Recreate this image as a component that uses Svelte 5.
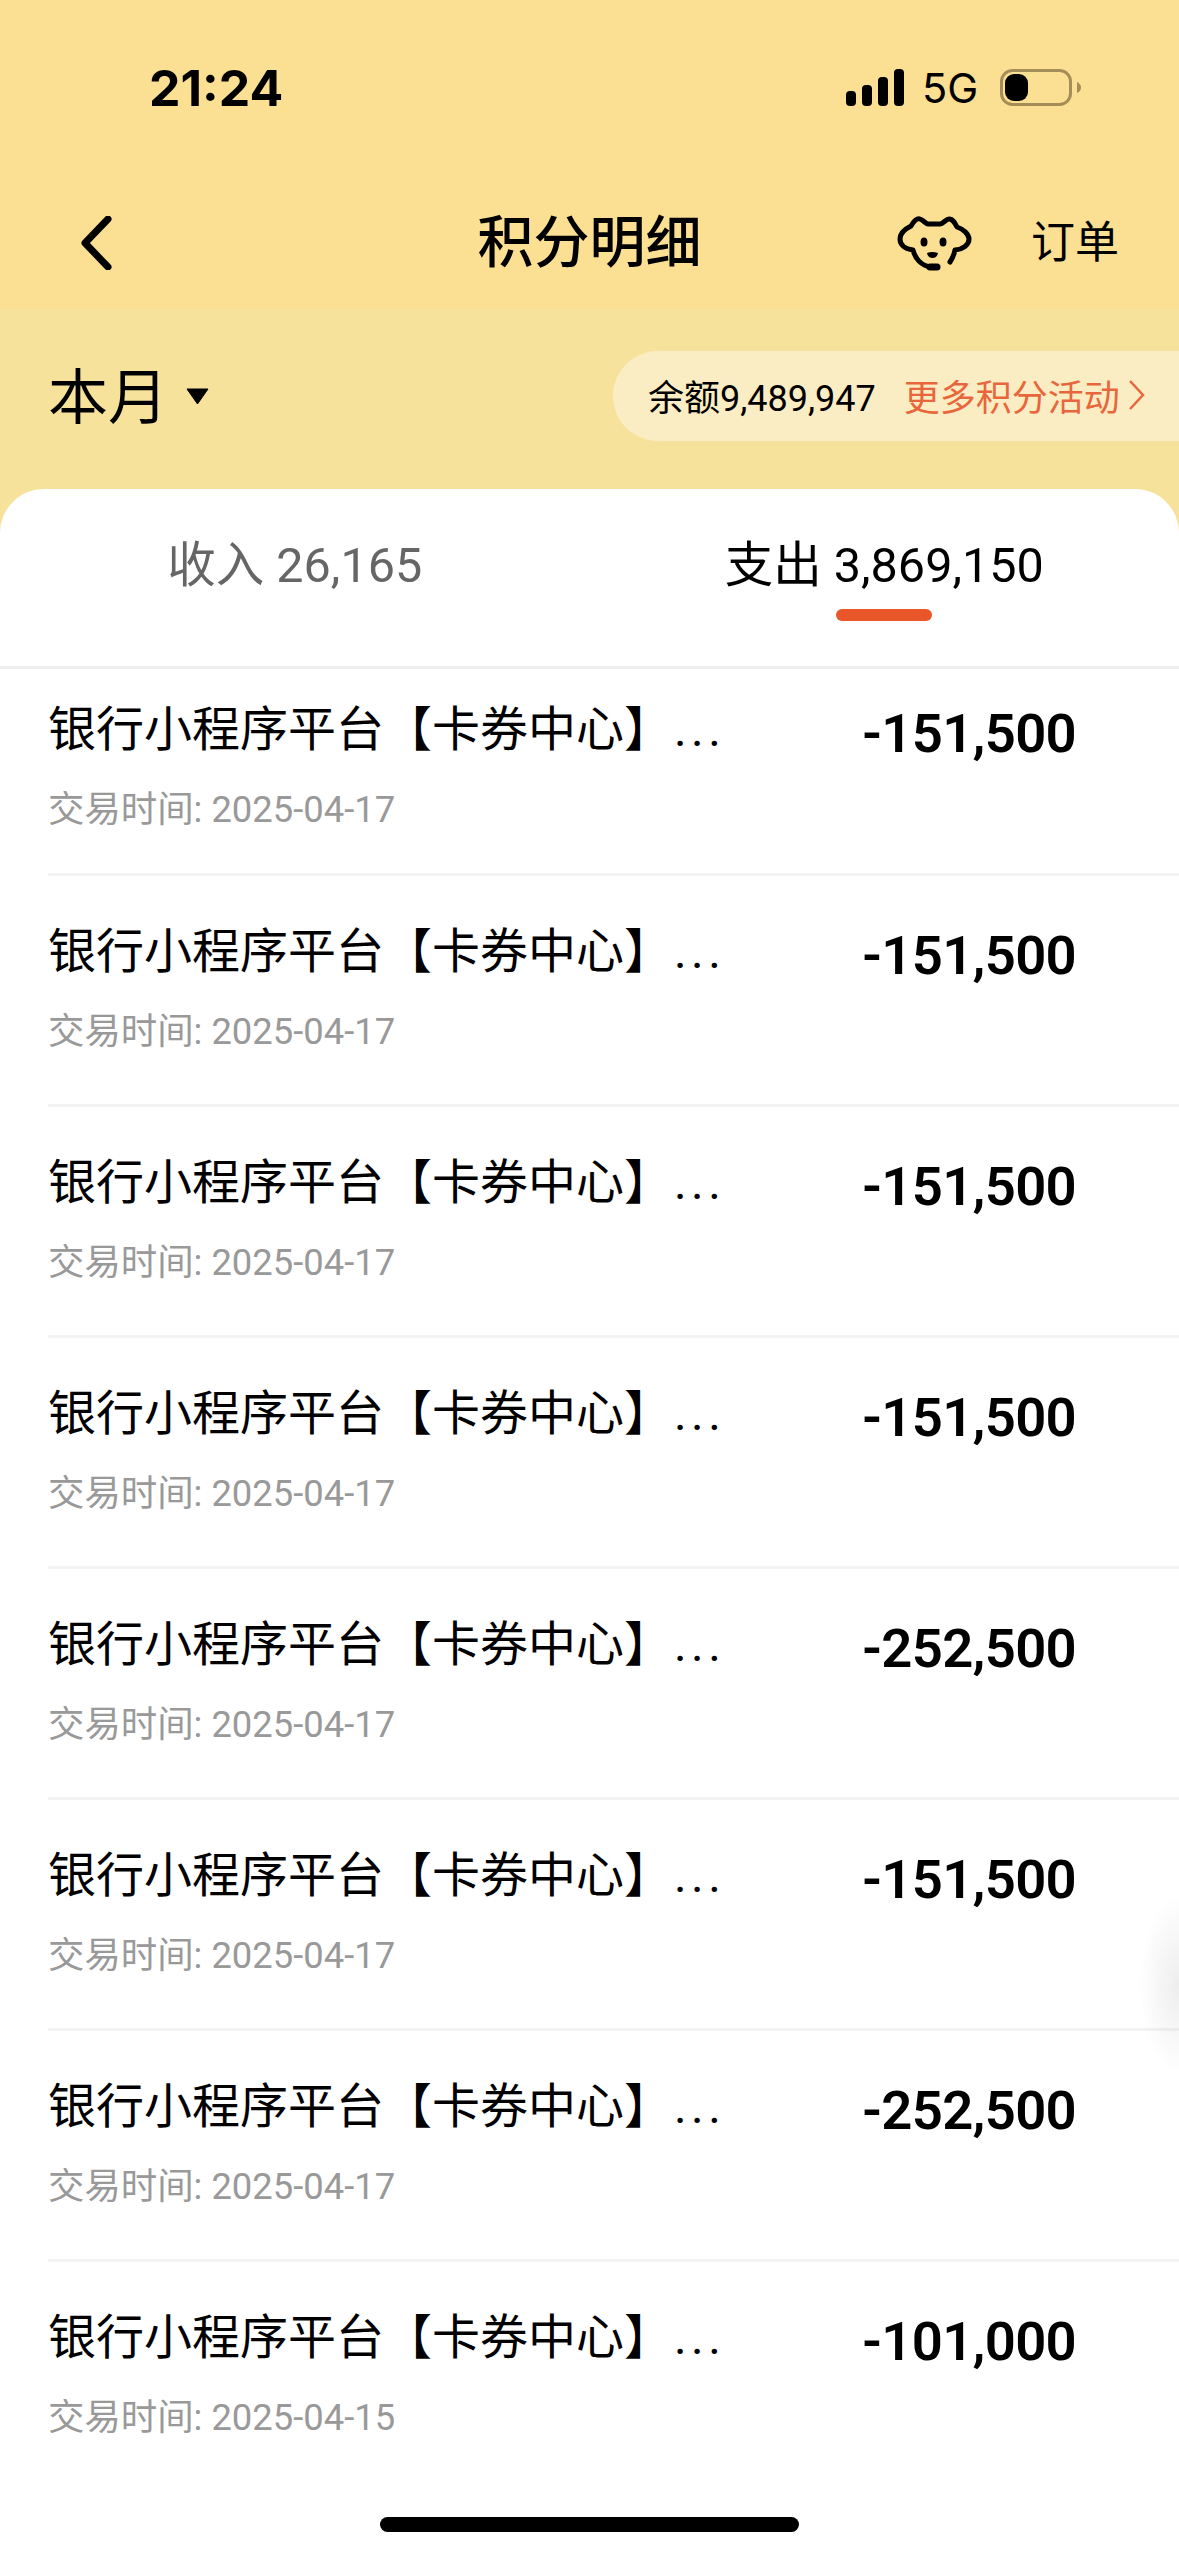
<script>
  const rows = [
    { amount: '-151,500', date: '2025-04-17' },
    { amount: '-151,500', date: '2025-04-17' },
    { amount: '-151,500', date: '2025-04-17' },
    { amount: '-151,500', date: '2025-04-17' },
    { amount: '-252,500', date: '2025-04-17' },
    { amount: '-151,500', date: '2025-04-17' },
    { amount: '-252,500', date: '2025-04-17' },
    { amount: '-101,000', date: '2025-04-15' }
  ];
</script>

<div class="page">
  <header class="top">
    <div class="status">
      <span class="time">21:24</span>
      <div class="status-right">
        <svg class="signal" width="58" height="37" viewBox="0 0 58 37">
          <rect x="0" y="22" width="10" height="15" rx="4" />
          <rect x="16" y="16" width="10" height="21" rx="4" />
          <rect x="32" y="8" width="10" height="29" rx="4" />
          <rect x="48" y="0" width="10" height="37" rx="4" />
        </svg>
        <span class="net">5G</span>
        <svg class="battery" width="82" height="37" viewBox="0 0 82 37">
          <rect x="1.5" y="1.5" width="69" height="34" rx="11" fill="none" stroke="#a48d58" stroke-width="3" />
          <rect x="5" y="5" width="23" height="27" rx="9" fill="#000" />
          <path d="M77 13 Q81 15 81 18.500 Q81 22 77 24 Z" fill="#a48d58" />
        </svg>
      </div>
    </div>
    <div class="nav">
      <svg class="back" width="38" height="54" viewBox="0 0 38 54">
        <path d="M30 3 L7 27 L30 51" fill="none" stroke="#000" stroke-width="7" stroke-linecap="round" stroke-linejoin="round" />
      </svg>
      <h1>积分明细</h1>
      <div class="nav-right">
        <svg class="dog" width="90" height="75" viewBox="0 0 90 75">
          <path d="M23 20 C26 15 29 12 32 13 C35 14 38 18 40 18 L52 18 C55 18 58 13 61 13 C65 13 67 17 69 21 C75 23 81 28 81 33 C81 39 75 43 67 44 C66 49 64 53 62 56 M23 20 C17 23 12 28 12 33 C12 39 17 43 25 44 C27 52 33 60 43 61" fill="none" stroke="#000" stroke-width="5" stroke-linecap="round" stroke-linejoin="round" />
          <ellipse cx="36" cy="36" rx="3.500" ry="4.500" />
          <ellipse cx="55" cy="36" rx="3.500" ry="4.500" />
          <path d="M39 47 Q44 45 50 47 Q49 52 44.500 52 Q40 52 39 47 Z" />
          <path d="M42 61 L49 61" fill="none" stroke="#000" stroke-width="7" stroke-linecap="round" />
        </svg>
        <span class="orders">订单</span>
      </div>
    </div>
  </header>

  <div class="summary">
    <div class="month">
      <span class="month-label">本月</span>
      <svg class="caret" width="23" height="17" viewBox="0 0 23 17"><path d="M1 1 L22 1 L11.500 16 Z" stroke="#000" stroke-linejoin="round" /></svg>
    </div>
    <div class="pill">
      <span class="balance">余额9,489,947</span>
      <span class="more">更多积分活动</span>
      <svg width="18" height="30" viewBox="0 0 18 30"><path d="M2 1 L15 15 L2 29" fill="none" stroke="#e8663c" stroke-width="2.500" /></svg>
    </div>
  </div>

  <main class="card">
    <div class="tabs">
      <div class="tab"><span>收入 26,165</span></div>
      <div class="tab active"><span>支出 3,869,150</span><i class="bar"></i></div>
    </div>
    <div class="list">
      {#each rows as row, i}
        <div class="row" class:first={i === 0}>
          <div class="info">
            <div class="title">银行小程序平台【卡券中心】<span class="dots">...</span></div>
            <div class="date">交易时间: {row.date}</div>
          </div>
          <div class="amount">{row.amount}</div>
        </div>
      {/each}
    </div>
    <div class="home"></div>
    <div class="float"></div>
  </main>
</div>

<style>
  :global(body) { margin: 0; background: #fff; }
  .page {
    width: 1179px; height: 2556px; overflow: hidden; background: #f7e29c;
    font-family: "Roboto", "Noto Sans CJK SC", sans-serif; color: #000;
    display: flex; flex-direction: column;
  }
  .top { background: #fbdf92; height: 308px; flex: none; }
  .status { height: 203px; padding: 61px 0 0 149px; box-sizing: border-box; display: flex; justify-content: space-between; }
  .time { font-size: 50px; font-weight: 700; line-height: 54px; font-family: "Inter", "Liberation Sans", sans-serif; }
  .status-right { display: flex; align-items: flex-start; padding: 8px 97px 0 0; }
  .signal { margin-right: 18px; }
  .net { font-size: 41.500px; line-height: 38px; width: 57px; margin-right: 21px; font-family: "Inter", "Liberation Sans", sans-serif; }
  .nav { display: grid; grid-template-columns: minmax(0, 1fr) auto minmax(0, 1fr); align-items: center; height: 80px; margin-left: 0; padding: 0 60px 0 78px; }
  h1 { margin: 0 0 0 -18px; text-align: center; font-size: 56px; font-weight: 500; line-height: 80px; }
  .nav-right { justify-self: end; display: flex; align-items: center; }
  .dog { margin-right: 53px; flex: none; }
  .orders { font-size: 44px; line-height: 78px; }
  .summary { height: 181px; flex: none; display: flex; justify-content: space-between; align-items: flex-start; }
  .month { display: flex; align-items: center; padding: 52px 0 0 48px; font-size: 60px; line-height: 72px; }
  .month-label { position: relative; top: 3px; }
  .caret { display: block; margin-left: 18px; }
  .pill { margin-top: 43px; height: 90px; width: 566px; box-sizing: border-box; background: #fbedc3; border-radius: 45px 0 0 45px; display: flex; align-items: center; padding: 0 0 3px 35px; font-size: 36px; }
  .more { color: #e8663c; margin-left: 28px; margin-right: 8px; }
  .card { flex: 1; background: #fff; border-radius: 44px 44px 0 0; position: relative; overflow: hidden; }
  .tabs { height: 180px; box-sizing: border-box; border-bottom: 3px solid #eee; display: flex; }
  .tab { width: 50%; display: flex; flex-direction: column; align-items: center; font-size: 48.500px; color: #666; line-height: 56px; padding-top: 49px; }
  .tab.active { color: #000; }
  .bar { display: block; width: 96px; height: 12px; margin-top: 15px; border-radius: 6px; background: #e8562a; }
  .row { height: 231px; box-sizing: border-box; margin-left: 48px; padding: 42px 103px 0 0; display: flex; justify-content: space-between; border-bottom: 3px solid #f3f3f3; }
  .row.first { height: 207px; padding-top: 27px; }
  .row:last-child { border-bottom: none; }
  .title { font-size: 48px; line-height: 68px; }
  .dots { letter-spacing: 4.400px; margin-left: 2px; }
  .date { font-size: 36.400px; color: #999; line-height: 44px; margin-top: 24px; }
  .amount { font-size: 54.500px; font-weight: 600; letter-spacing: -0.700px; line-height: 75px; }
  .home { position: absolute; left: 380px; top: 2028px; width: 419px; height: 15px; border-radius: 8px; background: #000; }
  .float { position: absolute; right: 0; top: 1406px; width: 40px; height: 180px; background: radial-gradient(ellipse 40px 90px at 100% 50%, rgba(0,0,0,0.07), rgba(0,0,0,0)); }
</style>
